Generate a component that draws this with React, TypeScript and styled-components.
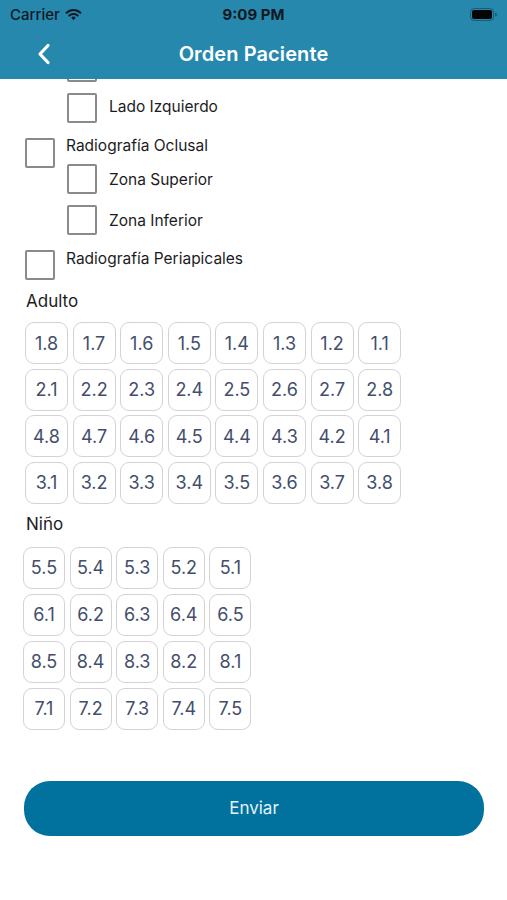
import React from 'react';
import styled, { createGlobalStyle } from 'styled-components';

const GlobalStyle = createGlobalStyle`
  html, body {
    margin: 0;
    padding: 0;
    background: #ffffff;
  }
  body {
    font-family: Inter, "Noto Sans", "Liberation Sans", sans-serif;
    -webkit-font-smoothing: antialiased;
  }
`;

const Screen = styled.div`
  width: 507px;
  height: 900px;
  display: flex;
  flex-direction: column;
  background: #ffffff;
  overflow: hidden;
`;

const TopBar = styled.header`
  background: #2788ae;
  display: flex;
  flex-direction: column;
  position: relative;
  z-index: 2;
`;

const StatusBar = styled.div`
  height: 28px;
  display: grid;
  grid-template-columns: 1fr auto 1fr;
  align-items: center;
  padding: 0 10px;
  color: #101820;
  font-size: 15px;
`;

const Carrier = styled.div`
  display: flex;
  align-items: center;
  gap: 5px;
  font-weight: 500;
`;

const Clock = styled.div`
  font-weight: 700;
  font-size: 15px;
`;

const Battery = styled.div`
  justify-self: end;
  display: flex;
  align-items: center;
`;

const NavBar = styled.div`
  height: 51px;
  display: grid;
  grid-template-columns: 60px 1fr 60px;
  align-items: center;
`;

const BackButton = styled.button`
  background: none;
  border: none;
  padding: 0 0 0 37px;
  height: 100%;
  display: flex;
  align-items: center;
  cursor: pointer;
`;

const Title = styled.h1`
  margin: 0;
  text-align: center;
  color: #ffffff;
  font-size: 20px;
  font-weight: 600;
  letter-spacing: 0.1px;
`;

const Body = styled.main`
  flex: 1;
  overflow: hidden;
  display: flex;
  flex-direction: column;
`;

const Options = styled.div`
  display: flex;
  flex-direction: column;
  margin-top: -27px;
`;

const Group = styled.div`
  display: flex;
  flex-direction: column;
  margin-bottom: 15px;
`;

const ParentRow = styled.label`
  display: flex;
  align-items: flex-start;
  gap: 11px;
  height: 26px;
  padding-left: 25px;
`;

const Children = styled.div`
  display: flex;
  flex-direction: column;
  gap: 11px;
`;

const ChildRow = styled.label`
  display: flex;
  align-items: center;
  gap: 12px;
  height: 30px;
  padding-left: 67px;
`;

const Box = styled.span`
  flex: none;
  width: 26px;
  height: 26px;
  border: 2px solid #8a8a8a;
  border-radius: 2px;
  background: #ffffff;
`;

const OptionText = styled.span<{ $lift?: number }>`
  font-size: 15.5px;
  line-height: 17px;
  color: #1c1c1e;
  margin-top: ${p => p.$lift ?? 0}px;
`;

const SectionLabel = styled.div<{ $top: number; $bottom: number }>`
  font-size: 17px;
  line-height: 20px;
  color: #1c1c1e;
  padding-left: 26px;
  margin-top: ${p => p.$top}px;
  margin-bottom: ${p => p.$bottom}px;
`;

const Grid = styled.div<{ $cols: number; $w: number; $left: number; $rowGap: number }>`
  display: grid;
  grid-template-columns: repeat(${p => p.$cols}, ${p => p.$w}px);
  grid-auto-rows: 42px;
  column-gap: 4.6px;
  row-gap: ${p => p.$rowGap}px;
  margin-left: ${p => p.$left}px;
`;

const Tooth = styled.button`
  display: flex;
  align-items: center;
  justify-content: center;
  padding: 0;
  background: #ffffff;
  border: 1px solid #d3d3d6;
  border-radius: 9px;
  color: #434e6c;
  font-family: inherit;
  font-size: 18px;
  cursor: pointer;
`;

const Footer = styled.div`
  padding: 51px 23px 0 24px;
`;

const SendButton = styled.button`
  width: 100%;
  height: 55px;
  border: none;
  border-radius: 26px;
  background: #00729d;
  color: #e3f2f8;
  font-family: inherit;
  font-size: 17px;
  cursor: pointer;
`;

const adult = [
  ['1.8', '1.7', '1.6', '1.5', '1.4', '1.3', '1.2', '1.1'],
  ['2.1', '2.2', '2.3', '2.4', '2.5', '2.6', '2.7', '2.8'],
  ['4.8', '4.7', '4.6', '4.5', '4.4', '4.3', '4.2', '4.1'],
  ['3.1', '3.2', '3.3', '3.4', '3.5', '3.6', '3.7', '3.8'],
];

const child = [
  ['5.5', '5.4', '5.3', '5.2', '5.1'],
  ['6.1', '6.2', '6.3', '6.4', '6.5'],
  ['8.5', '8.4', '8.3', '8.2', '8.1'],
  ['7.1', '7.2', '7.3', '7.4', '7.5'],
];

const Wifi = () => (
  <svg width="17" height="13" viewBox="0 0 17 13">
    <path d="M8.5 12.2 L6.2 9.6 A3.4 3.4 0 0 1 10.8 9.6 Z" fill="#101820" />
    <path d="M4.3 7.6 A6.1 6.1 0 0 1 12.7 7.6" stroke="#101820" strokeWidth="2" fill="none" strokeLinecap="round" />
    <path d="M1.6 4.8 A9.8 9.8 0 0 1 15.4 4.8" stroke="#101820" strokeWidth="2" fill="none" strokeLinecap="round" />
  </svg>
);

const BatteryIcon = () => (
  <svg width="27" height="13" viewBox="0 0 27 13">
    <rect x="0.5" y="0.5" width="23" height="12" rx="3.5" fill="none" stroke="#1d3e4d" strokeOpacity="0.6" />
    <rect x="2" y="2" width="20" height="9" rx="2" fill="#050505" />
    <path d="M25 4.5 A2 2 0 0 1 25 8.5 Z" fill="#1d3e4d" fillOpacity="0.6" />
  </svg>
);

const Chevron = () => (
  <svg width="14" height="22" viewBox="0 0 14 22">
    <path d="M11 2.5 L3 11 L11 19.5" stroke="#ffffff" strokeWidth="3.2" fill="none" strokeLinecap="round" strokeLinejoin="round" />
  </svg>
);

const App: React.FC = () => {
  return (
    <Screen>
      <GlobalStyle />
      <TopBar>
        <StatusBar>
          <Carrier>
            Carrier
            <Wifi />
          </Carrier>
          <Clock>9:09 PM</Clock>
          <Battery>
            <BatteryIcon />
          </Battery>
        </StatusBar>
        <NavBar>
          <BackButton aria-label="Volver">
            <Chevron />
          </BackButton>
          <Title>Orden Paciente</Title>
          <span />
        </NavBar>
      </TopBar>

      <Body>
        <Options>
          <Group>
            <Children>
              <ChildRow>
                <Box />
                <OptionText>Lado Derecho</OptionText>
              </ChildRow>
              <ChildRow>
                <Box />
                <OptionText $lift={-4}>Lado Izquierdo</OptionText>
              </ChildRow>
            </Children>
          </Group>

          <Group>
            <ParentRow>
              <Box />
              <OptionText $lift={-1}>Radiografía Oclusal</OptionText>
            </ParentRow>
            <Children>
              <ChildRow>
                <Box />
                <OptionText>Zona Superior</OptionText>
              </ChildRow>
              <ChildRow>
                <Box />
                <OptionText>Zona Inferior</OptionText>
              </ChildRow>
            </Children>
          </Group>

          <Group>
            <ParentRow>
              <Box />
              <OptionText>Radiografía Periapicales</OptionText>
            </ParentRow>
          </Group>
        </Options>

        <SectionLabel $top={0} $bottom={11}>Adulto</SectionLabel>
        <Grid $cols={8} $w={43} $left={25} $rowGap={4.5}>
          {adult.flat().map(n => (
            <Tooth key={n}>{n}</Tooth>
          ))}
        </Grid>

        <SectionLabel $top={10} $bottom={13}>Niño</SectionLabel>
        <Grid $cols={5} $w={42} $left={23} $rowGap={5}>
          {child.flat().map(n => (
            <Tooth key={n}>{n}</Tooth>
          ))}
        </Grid>

        <Footer>
          <SendButton>Enviar</SendButton>
        </Footer>
      </Body>
    </Screen>
  );
};

export default App;
